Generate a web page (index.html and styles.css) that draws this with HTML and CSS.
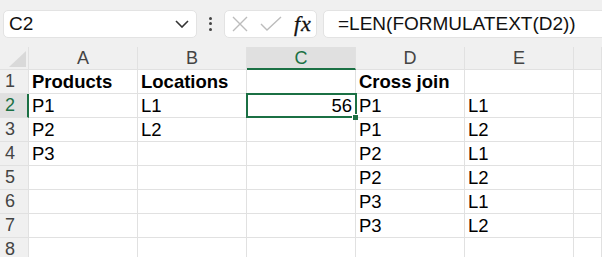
FILE: index.html
```html
<!DOCTYPE html>
<html>
<head>
  <link rel="stylesheet" href="styles.css">
</head>
<body>
  <div class="toolbar">
    <div class="namebox">
      <span>C2</span>
      <svg class="chevron" width="14" height="8" viewBox="0 0 14 8"><path d="M1 1l6 6 6-6" fill="none" stroke="#333" stroke-width="1.6"/></svg>
    </div>
    <div class="dots"><i></i><i></i><i></i></div>
    <div class="fnbox">
      <svg width="16" height="16" viewBox="0 0 16 16"><path d="M1 1l14 14M15 1L1 15" fill="none" stroke="#bcbcbc" stroke-width="1.4"/></svg>
      <svg width="22" height="16" viewBox="0 0 22 16"><path d="M1 8l6 6L21 1" fill="none" stroke="#bcbcbc" stroke-width="1.4"/></svg>
      <span class="fx">fx</span>
    </div>
    <div class="formula">=LEN(FORMULATEXT(D2))</div>
  </div>

  <div class="sheet">
    <div class="corner"></div>
    <div class="colhead">A</div>
    <div class="colhead">B</div>
    <div class="colhead active">C</div>
    <div class="colhead">D</div>
    <div class="colhead">E</div>
    <div class="colhead"></div>

    <div class="rowhead">1</div>
    <div class="cell bold">Products</div>
    <div class="cell bold">Locations</div>
    <div class="cell"></div>
    <div class="cell bold">Cross join</div>
    <div class="cell"></div>
    <div class="cell"></div>

    <div class="rowhead active">2</div>
    <div class="cell">P1</div>
    <div class="cell">L1</div>
    <div class="cell num selected">56<span class="handle"></span></div>
    <div class="cell">P1</div>
    <div class="cell">L1</div>
    <div class="cell"></div>

    <div class="rowhead">3</div>
    <div class="cell">P2</div>
    <div class="cell">L2</div>
    <div class="cell"></div>
    <div class="cell">P1</div>
    <div class="cell">L2</div>
    <div class="cell"></div>

    <div class="rowhead">4</div>
    <div class="cell">P3</div>
    <div class="cell"></div>
    <div class="cell"></div>
    <div class="cell">P2</div>
    <div class="cell">L1</div>
    <div class="cell"></div>

    <div class="rowhead">5</div>
    <div class="cell"></div>
    <div class="cell"></div>
    <div class="cell"></div>
    <div class="cell">P2</div>
    <div class="cell">L2</div>
    <div class="cell"></div>

    <div class="rowhead">6</div>
    <div class="cell"></div>
    <div class="cell"></div>
    <div class="cell"></div>
    <div class="cell">P3</div>
    <div class="cell">L1</div>
    <div class="cell"></div>

    <div class="rowhead">7</div>
    <div class="cell"></div>
    <div class="cell"></div>
    <div class="cell"></div>
    <div class="cell">P3</div>
    <div class="cell">L2</div>
    <div class="cell"></div>

    <div class="rowhead">8</div>
    <div class="cell"></div>
    <div class="cell"></div>
    <div class="cell"></div>
    <div class="cell"></div>
    <div class="cell"></div>
    <div class="cell"></div>
  </div>
</body>
</html>
```

FILE: styles.css
```css
body {
  margin: 0;
  overflow: hidden;
  font-family: "Liberation Sans", Arial, sans-serif;
  background: #ffffff;
}

/* formula bar */
.toolbar {
  display: flex;
  align-items: center;
  height: 47px;
  background: #f0f0f0;
  box-sizing: border-box;
  padding-left: 3px;
}

.namebox,
.fnbox,
.formula {
  height: 28px;
  box-sizing: border-box;
  background: #ffffff;
  border: 1px solid #e3e3e3;
  border-radius: 5px;
  display: flex;
  align-items: center;
}

.namebox {
  width: 194px;
  padding: 0 5px 0 5px;
  font-size: 19px;
  color: #111;
}

.namebox span {
  flex: 1;
}

.chevron {
  margin-right: 2px;
}

.dots {
  width: 27px;
  display: flex;
  flex-direction: column;
  align-items: center;
  gap: 2.5px;
}

.dots i {
  width: 3px;
  height: 3px;
  border-radius: 50%;
  background: #444;
}

.fnbox {
  width: 93px;
  padding-left: 7px;
  gap: 12px;
}

.fx {
  font-family: "Liberation Serif", serif;
  font-style: italic;
  font-size: 22px;
  color: #111;
  letter-spacing: 1px;
  -webkit-text-stroke: 0.3px #111;
}

.formula {
  flex: 1;
  margin-left: 6px;
  margin-right: -8px;
  padding-left: 14px;
  font-size: 19px;
  color: #111;
}

/* grid */
.sheet {
  display: grid;
  grid-template-columns: 29px 109px 109px 109px 109px 109px 1fr;
  grid-template-rows: 23px repeat(8, 24px);
}

.sheet > div {
  box-sizing: border-box;
  border-right: 1px solid #e1e1e1;
  border-bottom: 1px solid #e1e1e1;
}

.corner {
  background: #f0f0f0;
  position: relative;
}

.corner::after {
  content: "";
  position: absolute;
  right: 2px;
  bottom: 2px;
  border-left: 17px solid transparent;
  border-bottom: 16px solid #d9d9d9;
}

.colhead {
  background: #f0f0f0;
  color: #444;
  font-size: 18px;
  line-height: 22px;
  text-align: center;
}

.sheet > .colhead.active {
  background: #e0e0e0;
  color: #1b7044;
  border-bottom: 2px solid #1b7044;
}

.rowhead {
  background: #f0f0f0;
  color: #444;
  font-size: 18px;
  line-height: 23px;
  padding-left: 5px;
}

.sheet > .rowhead.active {
  background: #e0e0e0;
  color: #1b7044;
  border-right: 2px solid #1b7044;
}

.cell {
  font-size: 18.5px;
  line-height: 23px;
  padding: 0 3px;
  color: #000;
  white-space: nowrap;
}

.bold {
  font-weight: bold;
}

.num {
  text-align: right;
}

.selected {
  position: relative;
}

.selected::after {
  content: "";
  position: absolute;
  left: -1px;
  top: -1px;
  right: -2px;
  bottom: -1px;
  border: 2px solid #1b7044;
}

.handle {
  position: absolute;
  right: -3px;
  bottom: -3px;
  width: 5px;
  height: 5px;
  background: #1b7044;
  border-left: 1px solid #fff;
  border-top: 1px solid #fff;
  z-index: 1;
}
```
